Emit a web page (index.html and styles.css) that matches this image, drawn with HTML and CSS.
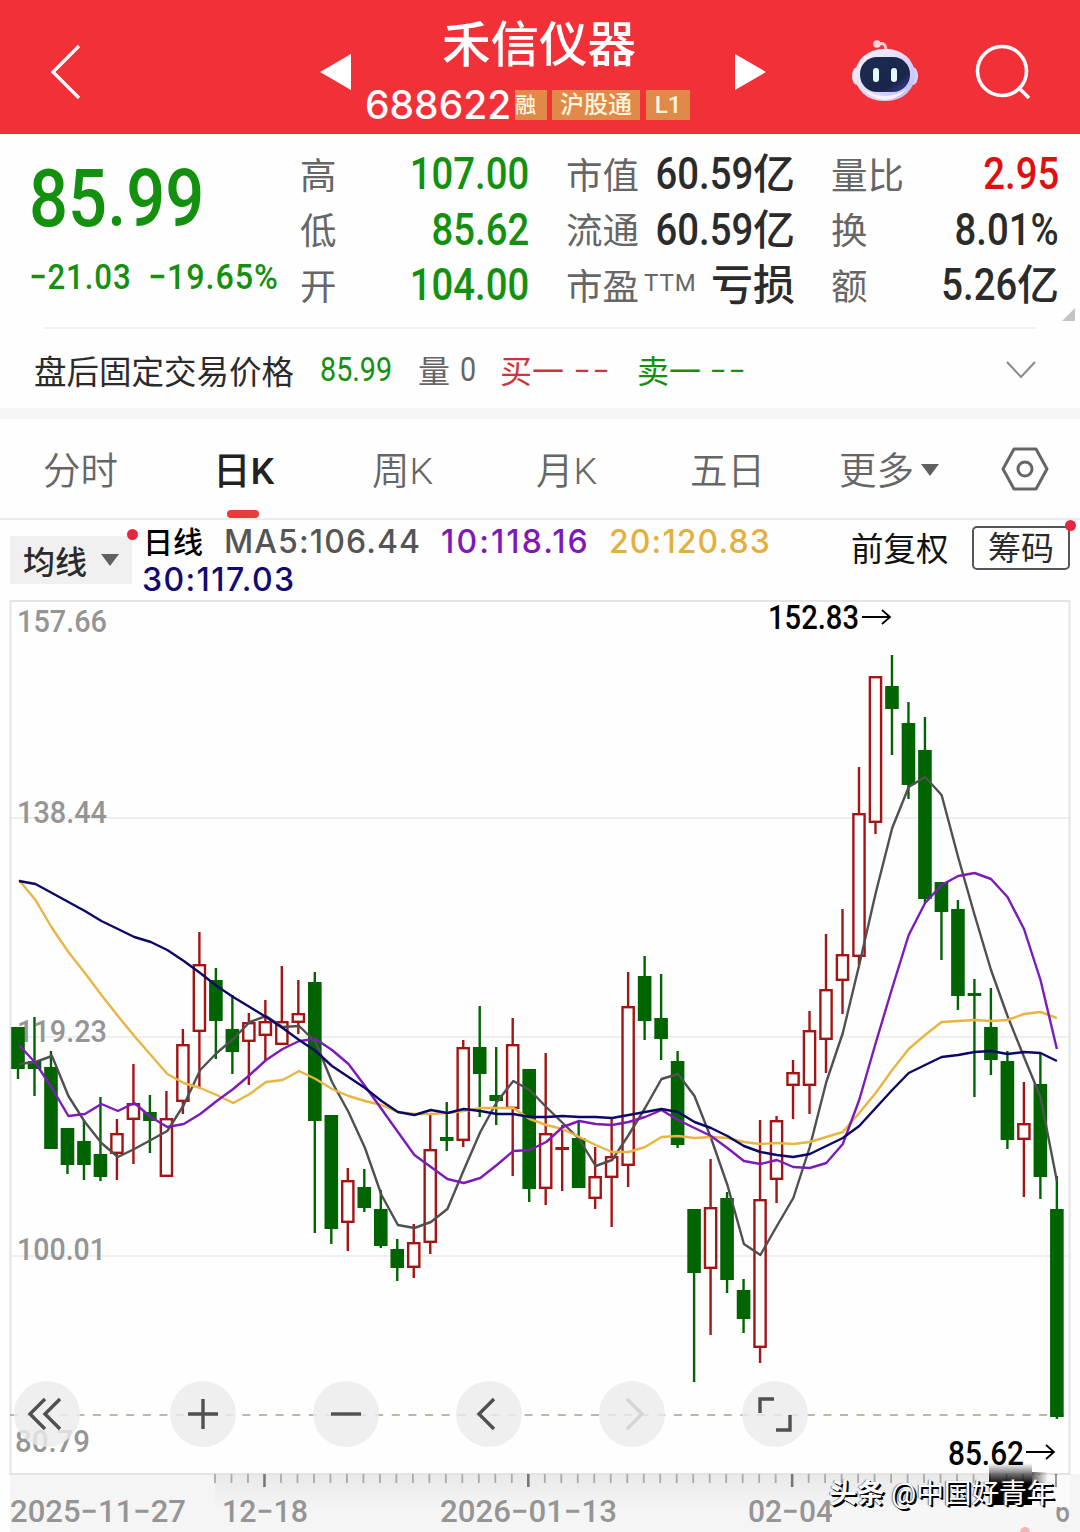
FILE: index.html
```html
<!DOCTYPE html>
<html lang="zh-CN">
  <head>
    <meta charset="UTF-8" />
    <meta name="viewport" content="width=device-width, initial-scale=1.0" />
    <title>禾信仪器 688622</title>
    <link rel="stylesheet" href="styles.css">
  </head>
  <body>
    <div class="container">
      <header class="header">
        <svg class="back" width="32" height="56" viewBox="0 0 32 56"><path d="M29 2 L3 28 L29 54" fill="none" stroke="#fff" stroke-width="3.2"/></svg>
        <svg width="31" height="36" viewBox="0 0 31 36"><path d="M31 0 V36 L0 18 Z" fill="#fff"/></svg>
        <div class="title">
          <h1>禾信仪器</h1>
          <div class="code">
            <span class="code-num">688622</span>
            <span class="tag tag-sm">融</span>
            <span class="tag tag-lg">沪股通</span>
            <span class="tag tag-md">L1</span>
          </div>
        </div>
        <svg width="31" height="36" viewBox="0 0 31 36"><path d="M0 0 V36 L31 18 Z" fill="#fff"/></svg>
        <svg class="robot" width="68" height="64" viewBox="0 0 68 64">
          <defs>
            <linearGradient id="shell" x1="0" y1="0" x2="1" y2="1">
              <stop offset="0" stop-color="#fff4f6"/><stop offset=".55" stop-color="#dcd8fb"/><stop offset="1" stop-color="#b9b6f2"/>
            </linearGradient>
            <linearGradient id="visor" x1="0" y1="0" x2="1" y2="1">
              <stop offset="0" stop-color="#1d2b52"/><stop offset=".7" stop-color="#1b2549"/><stop offset="1" stop-color="#3d3fa0"/>
            </linearGradient>
          </defs>
          <path d="M26 4 C33 2 35 5 35 11" fill="none" stroke="#ffc6cf" stroke-width="3"/>
          <circle cx="26" cy="4" r="3.8" fill="#ffd3da"/>
          <ellipse cx="6" cy="36" rx="5" ry="9" fill="#f4e6f6"/>
          <ellipse cx="62" cy="36" rx="5" ry="9" fill="#d9d4ff"/>
          <rect x="4" y="9" width="60" height="52" rx="28" fill="url(#shell)"/>
          <path d="M12 49 Q34 63 56 49 Q46 60 34 60 Q22 60 12 49Z" fill="#f6f2ff"/>
          <rect x="9" y="17" width="50" height="35" rx="17" fill="url(#visor)"/>
          <rect x="22" y="28" width="6" height="14" rx="3" fill="#e4fbff"/>
          <rect x="40" y="28" width="6" height="14" rx="3" fill="#e4fbff"/>
        </svg>
        <svg class="search" width="58" height="58" viewBox="0 0 58 58"><g fill="none" stroke="#fff" stroke-width="3.6"><circle cx="27" cy="28" r="24.5"/><path d="M43 44 L54 55"/></g></svg>
      </header>

      <section class="quote">
        <div class="price-box">
          <div class="price"><span class="num left">85.99</span></div>
          <div class="change"><span class="num left">−21.03</span><span class="num left">−19.65%</span></div>
        </div>
        <dl class="stats">
          <div><dt>高</dt><dd class="green"><span class="num">107.00</span></dd></div>
          <div><dt>低</dt><dd class="green"><span class="num">85.62</span></dd></div>
          <div><dt>开</dt><dd class="green"><span class="num">104.00</span></dd></div>
        </dl>
        <dl class="stats">
          <div><dt>市值</dt><dd><span class="num">60.59</span>亿</dd></div>
          <div><dt>流通</dt><dd><span class="num">60.59</span>亿</dd></div>
          <div><dt>市盈<span class="ttm">TTM</span></dt><dd>亏损</dd></div>
        </dl>
        <dl class="stats">
          <div><dt>量比</dt><dd class="red"><span class="num">2.95</span></dd></div>
          <div><dt>换</dt><dd><span class="num">8.01%</span></dd></div>
          <div><dt>额</dt><dd><span class="num">5.26</span>亿</dd></div>
        </dl>
        <span class="corner"></span>
      </section>

      <section class="after">
        <span class="after-name">盘后固定交易价格</span>
        <span class="green"><span class="num left">85.99</span></span>
        <span class="gray">量</span>
        <span class="gray"><span class="num left">0</span></span>
        <span class="buy">买一</span>
        <span class="buy dash">--</span>
        <span class="green">卖一</span>
        <span class="green dash">--</span>
        <svg width="30" height="20" viewBox="0 0 30 20"><path d="M1 3 L15 18 L29 3" fill="none" stroke="#8a8a8a" stroke-width="2"/></svg>
      </section>

      <nav class="tabs">
        <a>分时</a>
        <a class="active">日K</a>
        <a>周K</a>
        <a>月K</a>
        <a>五日</a>
        <a>更多<i class="caret"></i></a>
        <svg width="48" height="44" viewBox="0 0 48 44"><g fill="none" stroke="#666" stroke-width="3"><path d="M13 2 H35 L46 22 L35 42 H13 L2 22 Z" stroke-linejoin="round"/><circle cx="24" cy="22" r="7"/></g></svg>
      </nav>

      <section class="ma">
        <button class="ma-btn">均线<i class="caret"></i><b class="dot"></b></button>
        <div class="ma-list">
          <span class="day">日线</span>
          <span class="ma5">MA5:106.44</span>
          <span class="ma10">10:118.16</span>
          <span class="ma20">20:120.83</span>
          <span class="ma30">30:117.03</span>
        </div>
        <span class="adjust">前复权</span>
        <button class="chip">筹码<b class="dot"></b></button>
      </section>

      <section class="chart">
        <svg id="kline" width="1080" height="932" viewBox="0 600 1080 932"></svg>
        <div class="tools">
          <button><svg width="66" height="66"><path d="M31 18 L16 33 L31 48 M46 18 L31 33 L46 48"/></svg></button>
          <button><svg width="66" height="66"><path d="M33 18 V48 M18 33 H48"/></svg></button>
          <button><svg width="66" height="66"><path d="M18 33 H48"/></svg></button>
          <button><svg width="66" height="66"><path d="M38 18 L23 33 L38 48"/></svg></button>
          <button class="disabled"><svg width="66" height="66"><path d="M28 18 L43 33 L28 48"/></svg></button>
          <button><svg width="66" height="66"><path d="M18 32 V18 H32 M48 34 V49 H34" stroke-width="4"/></svg></button>
        </div>
        <div class="watermark"><b>头条</b> <span>@中国好青年</span></div>
      </section>
    </div>

    <script src="script.js"></script>
  </body>
</html>
```
FILE: styles.css
```css
* {
  margin: 0;
  padding: 0;
  box-sizing: border-box;
}
body {
  width: 1080px;
  background: #fefefe;
  font-family: Roboto, 'Noto Sans CJK SC', sans-serif;
  color: #2b2b2b;
}
.container {
  width: 1080px;
  height: 1532px;
  overflow: hidden;
}
button {
  border: none;
  background: none;
  font-family: inherit;
  color: inherit;
}
.num {
  display: inline-block;
  font-family: Roboto, sans-serif;
  font-weight: 500;
  transform: scaleX(.87);
  transform-origin: right center;
}
.num.left {
  transform-origin: left center;
}
.green { color: #14900f; }
.red { color: #e01010; }
.gray { color: #666; }
.buy { color: #d03438; }

.header {
  height: 134px;
  background: #f23038;
  color: #fff;
  display: grid;
  grid-template-columns: 320px 31px 384px 31px 86px 66px 57px 1fr;
  align-items: center;
  padding-top: 9px;
}
.back {
  margin-left: 50px;
}
.title {
  height: 125px;
  display: flex;
  flex-direction: column;
  align-items: flex-start;
  padding-left: 14px;
}
.title h1 {
  margin-left: 77px;
  font-size: 48.5px;
  line-height: 58px;
  font-weight: 500;
  margin-top: 8px;
  white-space: nowrap;
}
.code {
  display: flex;
  align-items: center;
  height: 32px;
  margin-top: 14px;
}
.code-num {
  width: 150px;
  font-family: Inter, sans-serif;
  font-size: 39px;
  font-weight: 500;
  line-height: 32px;
}
.tag {
  height: 30px;
  line-height: 31px;
  font-size: 24px;
  text-align: center;
  background: #df8a48;
  color: #fff4de;
  white-space: nowrap;
  font-weight: 500;
}
.tag-sm { width: 32px; font-size: 21px; margin-right: 5px; text-align: left; }
.tag-lg { width: 88px; margin-right: 6px; }
.tag-md { width: 44px; }
.robot {
  grid-column: 6;
  margin-left: -1px;
}
.search {
  grid-column: 8;
}

.quote {
  position: relative;
  height: 193px;
  padding-top: 13px;
  display: grid;
  grid-template-columns: 300px 229px 228px 228px;
}
.price-box {
  padding-left: 29px;
  color: #14900f;
}
.price {
  font-size: 79px;
  line-height: 104px;
  white-space: nowrap;
}
.change {
  display: flex;
  font-size: 35.5px;
  line-height: 52px;
  white-space: nowrap;
}
.change .num {
  width: 119px;
  letter-spacing: 1px;
  transform: scaleX(.88);
}
.change .num:last-child {
  transform: scaleX(.91);
}
.stats div {
  display: flex;
  justify-content: space-between;
  align-items: center;
  height: 55.5px;
  white-space: nowrap;
}
.stats dt {
  font-size: 36.5px;
  line-height: 50px;
  color: #666;
  margin-top: 4px;
}
.stats dd {
  display: flex;
  align-items: center;
  font-size: 42px;
  line-height: 55px;
  font-weight: 500;
}
.stats .num {
  font-size: 44px;
}
.stats:nth-child(3) { margin-left: 37px; margin-right: -38px; }
.stats:nth-child(4) { margin-left: 74px; margin-right: -74px; }
.ttm {
  font-size: 24px;
  letter-spacing: 1px;
  vertical-align: 9px;
  line-height: 24px;
  margin-left: 5px;
}
.corner {
  position: absolute;
  right: 5px;
  bottom: 6px;
  border-left: 13px solid transparent;
  border-bottom: 13px solid #c4c4c4;
}

.after {
  height: 92px;
  border-bottom: 11px solid #f5f5f5;
  display: grid;
  grid-template-columns: 286px 98px 42px 40px 75px 62px 74px 1fr 30px;
  align-items: center;
  padding: 3px 44px 0 34px;
  font-size: 32px;
  white-space: nowrap;
  background: linear-gradient(#f2f2f2, #f2f2f2) 44px 0 / 992px 2px no-repeat;
}
.after-name {
  font-size: 32.5px;
}
.after .num {
  font-weight: 450;
  font-size: 33px;
}
.dash {
  letter-spacing: 3px;
  transform: scaleX(1.6);
  transform-origin: left center;
}

.tabs {
  height: 101px;
  border-bottom: 2px solid #ececec;
  display: grid;
  grid-template-columns: 170px 159px 164px 154px 149px 161px 48px;
  align-items: center;
  padding-left: 43px;
  font-size: 37.5px;
  font-weight: 350;
  color: #666;
}
.tabs svg {
  margin-left: 1px;
}
.tabs a {
  position: relative;
  white-space: nowrap;
  height: 99px;
  line-height: 105px;
}
.tabs .active {
  color: #222;
  font-weight: 500;
}
.tabs .active::after {
  content: '';
  position: absolute;
  left: 14px;
  bottom: 0;
  width: 32px;
  height: 8px;
  border-radius: 4px;
  background: #e93c38;
}
.caret {
  display: inline-block;
  border: 9px solid transparent;
  border-top: 12px solid #606060;
  border-bottom: 0;
}
.tabs .caret {
  margin-left: 7px;
  vertical-align: 8px;
}

.ma {
  height: 80px;
  display: flex;
  padding-left: 10px;
}
.ma-btn {
  position: relative;
  width: 122px;
  height: 48px;
  margin-top: 16px;
  background: #f0f0f0;
  font-size: 32px;
  font-weight: 500;
  white-space: nowrap;
  display: flex;
  align-items: center;
  justify-content: center;
  gap: 14px;
}
.dot {
  position: absolute;
  top: -7px;
  right: -6px;
  width: 11px;
  height: 11px;
  border-radius: 50%;
  background: #e5273d;
}
.ma-list {
  width: 719px;
  padding: 3px 0 0 11px;
  display: grid;
  grid-template-columns: 81px 217px 168px 1fr;
  grid-template-rows: 38px 38px;
  font-family: Inter, 'Noto Sans CJK SC', sans-serif;
  font-size: 32px;
  font-weight: 500;
  line-height: 38px;
  letter-spacing: 1.1px;
  white-space: nowrap;
}
.day {
  font-family: 'Noto Sans CJK SC', sans-serif;
  font-size: 30px;
  line-height: 34px;
  letter-spacing: 0;
  color: #000;
}
.ma5 { color: #555; }
.ma10 { color: #7f18b8; letter-spacing: 2.1px; }
.ma20 { color: #e3b03c; }
.ma30 { color: #120a70; margin-left: -1px; letter-spacing: 1.4px; }
.adjust {
  width: 121px;
  font-size: 32.5px;
  line-height: 61px;
  color: #111;
}
.chip {
  position: relative;
  width: 98px;
  height: 44px;
  margin-top: 6px;
  border: 2px solid #555;
  border-radius: 5px;
  font-size: 33px;
  line-height: 41px;
  white-space: nowrap;
}
.chip .dot {
  top: -8px;
  right: -8px;
}

.chart {
  position: relative;
  height: 932px;
}
.chart > svg {
  display: block;
}
.tools {
  position: absolute;
  left: 14px;
  top: 781px;
  display: flex;
  gap: 77px;
}
.tools button {
  width: 66px;
  height: 66px;
  border-radius: 50%;
  background: rgba(235, 235, 235, .82);
}
.tools button:first-child {
  margin-right: 13px;
}
.tools path {
  fill: none;
  stroke: #505050;
  stroke-width: 3.4;
}
.tools .disabled path {
  stroke: #d5d5d5;
}
.watermark {
  position: absolute;
  left: 829px;
  top: 874px;
  font-size: 27.7px;
  line-height: 40px;
  color: #fff;
  white-space: nowrap;
  text-shadow: 2px 2px 0 #000, 1px 1px 0 #000, -1px 0 1px #777;
}
.axis {
  font-family: Roboto, sans-serif;
  font-size: 31px;
  font-weight: 500;
  fill: #959595;
}
.mark {
  font-family: Roboto, sans-serif;
  font-size: 32.5px;
  font-weight: 500;
  fill: #000;
}
```
FILE: script.js
```js
var svg = document.getElementById('kline');
var STEP = 16.49, X0 = 18;

// body top, body bottom, high, low, 1 = up
var candles = [
  [1027,1069,1027,1079,0],[1061,1069,1017,1096,0],[1067,1149,1051,1149,0],[1128,1165,1128,1174,0],
  [1141,1165,1120,1180,0],[1154,1177,1097,1181,0],[1133,1154,1119,1180,1],[1103,1120,1064,1164,1],
  [1112,1121,1095,1153,0],[1118,1177,1091,1177,1],[1044,1102,1029,1114,1],[964,1032,932,1087,1],
  [980,1021,968,1059,0],[1029,1052,995,1074,0],[1022,1042,1013,1085,1],[1021,1036,1000,1060,1],
  [1021,1045,966,1045,1],[1013,1023,980,1034,1],[982,1121,972,1233,0],[1115,1229,1115,1244,0],
  [1180,1223,1168,1251,1],[1187,1208,1169,1212,0],[1209,1246,1190,1248,0],[1249,1268,1239,1281,0],
  [1242,1268,1224,1278,1],[1149,1243,1115,1254,1],[1137,1141,1102,1151,0],[1047,1141,1040,1147,1],
  [1047,1074,1006,1117,0],[1095,1101,1047,1125,0],[1044,1109,1018,1176,1],[1069,1189,1069,1202,0],
  [1133,1189,1053,1205,1],[1147,1150,1125,1191,1],[1138,1188,1121,1188,0],[1176,1199,1147,1209,1],
  [1156,1178,1118,1227,1],[1006,1166,972,1187,1],[976,1021,956,1040,0],[1018,1039,974,1060,0],
  [1061,1145,1051,1148,0],[1209,1273,1209,1382,0],[1207,1269,1159,1335,1],[1198,1280,1192,1293,0],
  [1290,1319,1279,1333,0],[1199,1348,1120,1363,1],[1120,1180,1116,1203,1],[1072,1086,1060,1119,1],
  [1030,1086,1011,1114,1],[989,1040,934,1073,1],[954,981,909,1014,1],[813,957,767,965,1],
  [676,823,676,834,1],[686,709,655,755,0],[723,785,702,799,0],[750,899,717,903,0],
  [882,912,882,960,0],[909,996,900,1010,0],[993,996,979,1097,0],[1027,1060,988,1075,0],
  [1061,1140,1051,1149,0],[1123,1140,1082,1197,1],[1084,1177,1054,1199,0],[1209,1417,1176,1419,0]
];

var lines = {
  '#505050': [1064,1062,1056,1096,1122,1143,1157,1149,1140,1131,1105,1070,1053,1039,1022,1016,1027,1026,1042,1082,1112,1148,1195,1225,1228,1222,1209,1170,1132,1102,1081,1090,1107,1123,1139,1166,1160,1135,1108,1079,1074,1096,1138,1185,1244,1255,1226,1198,1147,1082,1033,965,893,828,787,777,795,857,915,970,1016,1057,1097,1181],
  '#e9b542': [880,900,928,952,973,995,1016,1036,1055,1074,1083,1088,1095,1103,1094,1082,1080,1071,1079,1089,1096,1101,1105,1112,1114,1114,1113,1111,1108,1108,1108,1119,1125,1129,1137,1145,1152,1152,1147,1137,1136,1138,1137,1138,1142,1144,1143,1144,1142,1137,1132,1113,1093,1070,1049,1035,1022,1021,1020,1021,1020,1014,1012,1018],
  '#7d1bb8': [1045,1063,1088,1116,1114,1104,1111,1103,1117,1127,1124,1114,1101,1089,1075,1060,1049,1041,1039,1050,1064,1086,1109,1132,1155,1167,1179,1183,1178,1165,1151,1150,1142,1127,1121,1124,1125,1122,1117,1110,1120,1128,1136,1148,1161,1164,1160,1167,1168,1163,1144,1100,1043,988,935,903,885,876,873,879,897,929,980,1049],
  '#0b0868': [881,884,893,902,911,921,929,937,942,950,961,973,986,997,1007,1017,1028,1040,1051,1066,1077,1088,1101,1112,1115,1110,1113,1109,1111,1114,1114,1117,1117,1116,1117,1117,1118,1115,1112,1109,1112,1122,1128,1136,1146,1152,1155,1157,1154,1146,1138,1126,1108,1090,1073,1065,1057,1055,1052,1051,1054,1052,1053,1061]
};

function line(x1, y1, x2, y2, color, w, extra) {
  return '<line x1="' + x1 + '" y1="' + y1 + '" x2="' + x2 + '" y2="' + y2 + '" stroke="' + color + '" stroke-width="' + w + '" ' + (extra || '') + '/>';
}

function text(cls, x, y, w, str) {
  return '<text class="' + cls + '" x="' + x + '" y="' + y + '" textLength="' + w + '" lengthAdjust="spacingAndGlyphs">' + str + '</text>';
}

var out = '<defs><linearGradient id="ax" x1="0" y1="0" x2="0" y2="1"><stop offset="0" stop-color="#e9e9e9"/><stop offset="1" stop-color="#f5f5f5"/></linearGradient>' +
  '<linearGradient id="blk" x1="0" y1="0" x2="0" y2="1"><stop offset="0" stop-color="#000" stop-opacity="0"/><stop offset=".5" stop-color="#000"/></linearGradient>' +
  '<linearGradient id="fade" x1="0" y1="0" x2="1" y2="0"><stop offset="0" stop-color="#000" stop-opacity=".6"/><stop offset="1" stop-color="#000" stop-opacity="0"/></linearGradient></defs>';

out += '<rect x="10" y="1474" width="1070" height="58" fill="#f5f5f5"/><rect x="215" y="1474" width="830" height="36" fill="url(#ax)"/>';
out += '<rect x="10.5" y="601" width="1059" height="873" fill="#fefefe" stroke="#e4e4e4" stroke-width="2"/>';
[818, 1037, 1256].forEach(function (y) {
  out += line(11, y, 1069, y, '#e8e8e8', 1.5);
});
out += line(10, 1415, 1070, 1415, '#a5a18f', 1.3, 'stroke-dasharray="8 8.6"');

out += text('axis', 17, 632, 90, '157.66') + text('axis', 17, 823, 90, '138.44') +
  text('axis', 17, 1042, 90, '119.23') + text('axis', 17, 1260, 89, '100.01') + text('axis', 15, 1452, 75, '80.79');

candles.forEach(function (c, i) {
  var x = X0 + i * STEP, color = c[4] ? '#a31515' : '#006400';
  out += line(x, c[2], x, c[0], color, 2.4) + line(x, c[1], x, c[3], color, 2.4);
  if (c[4] && c[1] - c[0] > 5) {
    out += '<rect x="' + (x - 5.6) + '" y="' + (c[0] + 1.2) + '" width="11.2" height="' + (c[1] - c[0] - 2.4) + '" fill="#fff" stroke="' + color + '" stroke-width="2.4"/>';
  } else {
    out += '<rect x="' + (x - 6.8) + '" y="' + c[0] + '" width="13.6" height="' + (c[1] - c[0]) + '" fill="' + color + '"/>';
  }
});

for (var color in lines) {
  var pts = lines[color].map(function (y, i) { return (X0 + 1 + i * 16.475).toFixed(1) + ',' + y; });
  out += '<polyline points="' + pts.join(' ') + '" fill="none" stroke="' + color + '" stroke-width="2.4" stroke-linejoin="round"/>';
}

// time axis
for (var t = 0; t < 52; t++) {
  var tx = 215 + t * 16.49, major = t % 16 == 3;
  out += line(tx, 1474, tx, major ? 1487 : 1483, major ? '#777' : '#aaa', major ? 2.6 : 1.8);
}
out += text('axis', 10, 1522, 176, '2025−11−27') + text('axis', 222, 1522, 86, '12−18') +
  text('axis', 440, 1522, 177, '2026−01−13') + text('axis', 748, 1522, 85, '02−04') + text('axis', 1055, 1522, 15, '6');
out += '<rect x="832" y="1505" width="222" height="27" fill="#f6f6f6"/>';
out += '<rect x="1033" y="1475" width="37" height="32" fill="#fafafa"/>';
out += '<rect x="989" y="1463" width="43" height="42" fill="url(#blk)"/><rect x="1032" y="1472" width="16" height="12" fill="url(#fade)"/>';
out += line(1056, 1475, 1056, 1487, '#999', 2) + '<circle cx="1025" cy="1532" r="5" fill="#f3b5b5"/>';

out += text('mark', 768, 629, 91, '152.83') + text('mark', 948, 1465, 76, '85.62');
[[862, 617], [1026, 1452]].forEach(function (p) {
  out += '<path d="M' + p[0] + ' ' + p[1] + ' h28 m-8 -7 l8 7 l-8 7" fill="none" stroke="#000" stroke-width="1.8"/>';
});

svg.innerHTML = out;
```
